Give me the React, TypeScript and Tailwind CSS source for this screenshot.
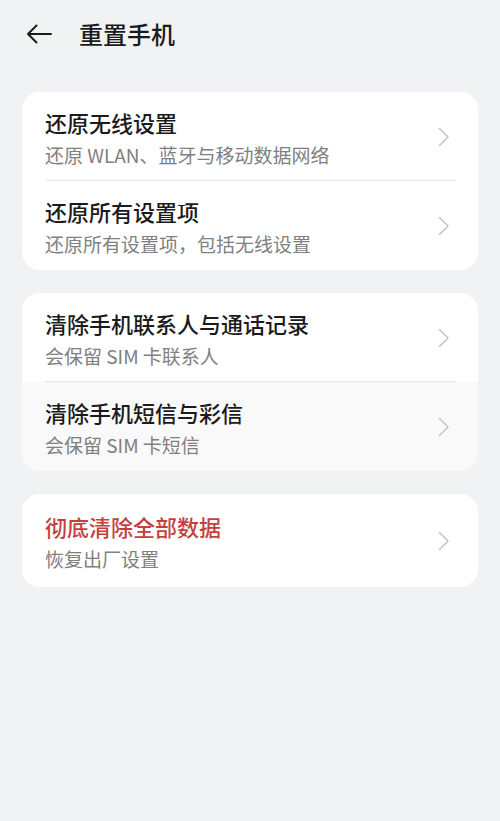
import React from "react";

type Item = { title: string; sub: string; danger?: boolean; pressed?: boolean };

const groups: Item[][] = [
  [
    { title: "还原无线设置", sub: "还原 WLAN、蓝牙与移动数据网络" },
    { title: "还原所有设置项", sub: "还原所有设置项，包括无线设置" },
  ],
  [
    { title: "清除手机联系人与通话记录", sub: "会保留 SIM 卡联系人" },
    { title: "清除手机短信与彩信", sub: "会保留 SIM 卡短信", pressed: true },
  ],
  [{ title: "彻底清除全部数据", sub: "恢复出厂设置", danger: true }],
];

function Chevron() {
  return (
    <svg width="12" height="20" viewBox="0 0 12 20" fill="none" className="shrink-0">
      <path d="M1.5 1.5 L10 10 L1.5 18.5" stroke="#c6c6c8" strokeWidth="1.6" strokeLinecap="round" strokeLinejoin="round" />
    </svg>
  );
}

function Row({ item, last, tall }: { item: Item; last: boolean; tall?: boolean }) {
  return (
    <div className={`relative flex items-center pl-[23px] pr-[28px] ${item.pressed ? "bg-[#f9f9f9]" : "bg-white"}`}>
      <div className={`flex-1 flex flex-col ${tall ? "pt-[18px] pb-[15px]" : "pt-[16px] pb-[13px]"}`}>
        <div className={`text-[22px] leading-[28px] font-medium ${item.danger ? "text-[#c5403d]" : "text-[#1b1b1b]"}`}>{item.title}</div>
        <div className="mt-[6px] text-[19px] leading-[26px] text-[#808080]">{item.sub}</div>
      </div>
      <Chevron />
      {!last && <div className="absolute left-[23px] right-[22px] bottom-0 h-px bg-[#e6e6e6]" />}
    </div>
  );
}

export default function App() {
  return (
    <div className="w-[500px] h-[821px] bg-[#f1f2f4] overflow-hidden" style={{ fontFamily: '"Noto Sans CJK SC", "Noto Sans", sans-serif' }}>
      <div className="flex items-center h-[68px] pl-[26px]">
        <svg width="26" height="20" viewBox="0 0 26 20" fill="none">
          <path d="M25 10 H2 M10.5 1.5 L2 10 L10.5 18.5" stroke="#1b1b1b" strokeWidth="2" strokeLinecap="round" strokeLinejoin="round" />
        </svg>
        <h1 className="ml-[27px] text-[24px] leading-[32px] font-medium text-[#1b1b1b]">重置手机</h1>
      </div>
      <div className="flex flex-col gap-[23px] px-[22px] pt-[24px]">
        {groups.map((g, gi) => (
          <div key={gi} className="rounded-[18px] overflow-hidden bg-white">
            {g.map((item, i) => (
              <Row key={item.title} item={item} last={i === g.length - 1} tall={g.length === 1} />
            ))}
          </div>
        ))}
      </div>
    </div>
  );
}
